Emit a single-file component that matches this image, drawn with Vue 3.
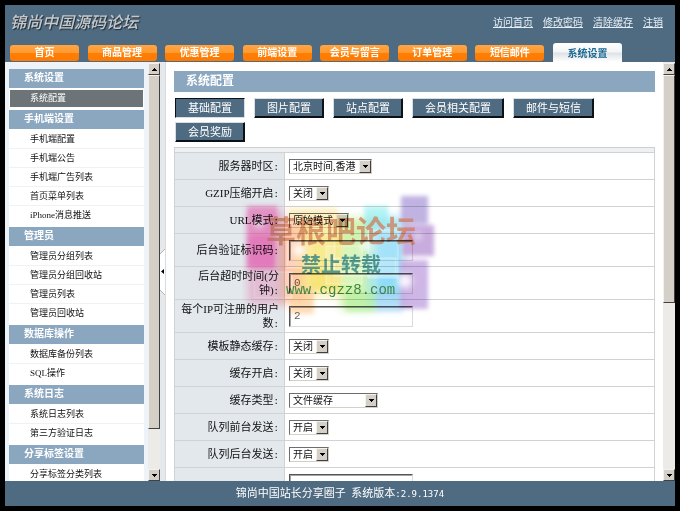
<script setup>
import { ref } from 'vue'

const userLinks = ['访问首页', '修改密码', '清除缓存', '注销']
const tabs = ['首页', '商品管理', '优惠管理', '前端设置', '会员与留言', '订单管理', '短信邮件', '系统设置']
const activeTab = '系统设置'

const menu = [
  { title: '系统设置', items: ['系统配置'] },
  { title: '手机端设置', items: ['手机端配置', '手机端公告', '手机端广告列表', '首页菜单列表', 'iPhone消息推送'] },
  { title: '管理员', items: ['管理员分组列表', '管理员分组回收站', '管理员列表', '管理员回收站'] },
  { title: '数据库操作', items: ['数据库备份列表', 'SQL操作'] },
  { title: '系统日志', items: ['系统日志列表', '第三方验证日志'] },
  { title: '分享标签设置', items: ['分享标签分类列表'] }
]
const activeItem = '系统配置'

const sections = ['基础配置', '图片配置', '站点配置', '会员相关配置', '邮件与短信', '会员奖励']
const activeSection = ref('基础配置')

const fields = ref([
  { id: 'timezone', label: '服务器时区', type: 'choice', size: 'large', value: '北京时间,香港' },
  { id: 'gzip', label: 'GZIP压缩开启', type: 'choice', size: 'small', value: '关闭' },
  { id: 'url', label: 'URL模式', type: 'choice', size: 'medium', value: '原始模式' },
  { id: 'code', label: '后台验证标识码', type: 'entry', value: '' },
  { id: 'timeout', label: '后台超时时间(分钟)', type: 'entry', value: '0' },
  { id: 'ip', label: '每个IP可注册的用户数', type: 'entry', value: '2' },
  { id: 'tplcache', label: '模板静态缓存', type: 'choice', size: 'small', value: '关闭' },
  { id: 'cache', label: '缓存开启', type: 'choice', size: 'small', value: '关闭' },
  { id: 'cachetype', label: '缓存类型', type: 'choice', size: 'wide', value: '文件缓存' },
  { id: 'front', label: '队列前台发送', type: 'choice', size: 'small', value: '开启' },
  { id: 'back', label: '队列后台发送', type: 'choice', size: 'small', value: '开启' },
  { id: 'count', label: '', type: 'entry', value: '' }
])
const options = {
  timezone: ['北京时间,香港'],
  url: ['原始模式'],
  cachetype: ['文件缓存']
}
const optionsFor = (id) => options[id] || ['开启', '关闭']
</script>

<template>
  <div class="page">
    <header class="header">
      <div class="brand-row">
        <h1 class="logo">锦尚中国源码论坛</h1>
        <nav class="user-links">
          <a v-for="l in userLinks" :key="l" href="#">{{ l }}</a>
        </nav>
      </div>
      <nav class="tabs">
        <a v-for="t in tabs" :key="t" href="#" class="tab" :class="{ active: t === activeTab }">{{ t }}</a>
      </nav>
    </header>

    <div class="body">
      <aside class="sidebar">
        <section v-for="g in menu" :key="g.title">
          <h2>{{ g.title }}</h2>
          <ul>
            <li v-for="i in g.items" :key="i">
              <a href="#" :class="{ current: i === activeItem }">{{ i }}</a>
            </li>
          </ul>
        </section>
      </aside>
      <div class="scrollbar left" aria-hidden="true">
        <span class="cap"><svg viewBox="0 0 5 3"><path d="M2 0h1v1h1v1h1v1H0V2h1V1h1z" /></svg></span>
        <span class="thumb"></span>
        <span class="track"></span>
        <span class="cap"><svg viewBox="0 0 5 3"><path d="M0 0h5v1H4v1H3v1H2V2H1V1H0z" /></svg></span>
      </div>
      <div class="splitter" aria-hidden="true">
        <svg viewBox="0 0 5 46"><path d="M5 0L0 5v36l5 5z" fill="#fff" /><path d="M5 0L0 5M0 41l5 5" stroke="#b5b5b5" fill="none" /><path d="M4 20v5L1 22.500z" fill="#000" /></svg>
      </div>

      <main class="main">
        <h2 class="title">系统配置</h2>
        <div class="sections">
          <button
            v-for="s in sections"
            :key="s"
            type="button"
            :class="{ pressed: s === activeSection }"
            @click="activeSection = s"
          >{{ s }}</button>
        </div>
        <div class="strip"></div>
        <table class="settings">
          <tbody>
            <tr v-for="f in fields" :key="f.id" :class="f.type">
              <th scope="row"><label :for="f.id">{{ f.label }}<span v-if="f.label" class="colon">:</span></label></th>
              <td>
                <span v-if="f.type === 'choice'" class="select" :class="f.size">
                  <select :id="f.id" v-model="f.value">
                    <option v-for="o in optionsFor(f.id)" :key="o">{{ o }}</option>
                  </select>
                  <span class="drop" aria-hidden="true"><svg viewBox="0 0 5 3"><path d="M0 0h5v1H4v1H3v1H2V2H1V1H0z" /></svg></span>
                </span>
                <input v-else :id="f.id" v-model="f.value" type="text" />
              </td>
            </tr>
          </tbody>
        </table>

        <svg class="stamp" viewBox="0 0 204 132" width="204" height="132">
          <defs>
            <filter id="soft" x="-20%" y="-20%" width="140%" height="140%"><feGaussianBlur stdDeviation="2" /></filter>
            <filter id="wide" x="-20%" y="-20%" width="140%" height="140%"><feGaussianBlur stdDeviation="4" /></filter>
            <filter id="glow" x="-50%" y="-50%" width="200%" height="200%"><feGaussianBlur stdDeviation="3" /></filter>
          </defs>
          <g filter="url(#wide)">
            <rect x="6" y="22" width="36" height="94" fill="#ffa0cc" opacity=".6" />
            <rect x="38" y="32" width="28" height="84" fill="#ffb287" opacity=".7" />
            <rect x="58" y="32" width="44" height="76" fill="#f8e469" opacity=".6" />
            <rect x="98" y="30" width="34" height="92" fill="#b9ec86" opacity=".65" />
            <rect x="126" y="28" width="36" height="92" fill="#86dcf5" opacity=".65" />
          </g>
          <g filter="url(#soft)">
            <rect x="5" y="18" width="30" height="30" fill="#ff7cc4" opacity=".6" />
            <rect x="5" y="48" width="28" height="32" fill="#ff5cba" opacity=".6" />
            <rect x="46" y="20" width="50" height="14" fill="#fbe6a0" opacity=".6" />
            <rect x="68" y="50" width="30" height="52" fill="#f3dc4c" opacity=".5" />
            <rect x="48" y="100" width="24" height="26" fill="#fdd09b" opacity=".7" />
            <rect x="104" y="104" width="30" height="20" fill="#b4f0a0" opacity=".6" />
            <rect x="122" y="18" width="24" height="20" fill="#8eeeee" opacity=".6" />
            <rect x="136" y="46" width="22" height="62" fill="#6fd2fa" opacity=".5" />
            <rect x="134" y="100" width="26" height="24" fill="#a5d0f6" opacity=".5" />
            <rect x="159" y="8" width="27" height="28" fill="#b5a6dc" opacity=".85" />
            <rect x="160" y="37" width="32" height="31" fill="#bb97d6" opacity=".8" />
            <rect x="158" y="72" width="28" height="49" fill="#c2a4e0" opacity=".8" />
          </g>
          <g fill="#fff" fill-opacity=".18" stroke="#fff" stroke-opacity=".4">
            <rect x="45" y="52" width="48" height="28" />
            <rect x="84" y="58" width="36" height="38" />
            <rect x="92" y="70" width="62" height="18" />
            <rect x="12" y="84" width="38" height="26" />
            <rect x="126" y="42" width="30" height="48" />
          </g>
          <g fill="#fff" filter="url(#glow)" opacity=".9">
            <circle cx="57" cy="62" r="6" />
            <circle cx="17" cy="35" r="5" />
            <circle cx="124" cy="58" r="5" />
            <circle cx="163" cy="93" r="7" />
            <circle cx="176" cy="48" r="3" />
          </g>
          <text x="24" y="54" class="stamp-name">草根吧论坛</text>
          <text x="59" y="84" class="stamp-note">禁止转载</text>
          <text x="44" y="106" class="stamp-url">www.cgzz8.com</text>
        </svg>
      </main>
      <div class="scrollbar right" aria-hidden="true">
        <span class="cap"><svg viewBox="0 0 5 3"><path d="M2 0h1v1h1v1h1v1H0V2h1V1h1z" /></svg></span>
        <span class="thumb"></span>
        <span class="track"></span>
        <span class="cap"><svg viewBox="0 0 5 3"><path d="M0 0h5v1H4v1H3v1H2V2H1V1H0z" /></svg></span>
      </div>
    </div>

    <footer class="footer">锦尚中国站长分享圈子&nbsp; 系统版本<span class="version">:2.9.1374</span></footer>
  </div>
</template>

<style>
body {
  background: #000;
}
</style>

<style scoped>
.page {
  box-sizing: border-box;
  height: 100vh;
  border: 5px solid #000;
  display: flex;
  flex-direction: column;
  font-family: "Liberation Serif", "Noto Sans CJK SC", serif;
  font-size: 11px;
  color: #111;
  background: #fff;
}
h1, h2, ul {
  margin: 0;
  padding: 0;
  list-style: none;
}
a {
  color: inherit;
}

.header {
  background: #4f6b81;
  height: 57px;
  flex: none;
  display: flex;
  flex-direction: column;
  justify-content: space-between;
}
.brand-row {
  display: flex;
  justify-content: space-between;
  align-items: center;
  padding: 6px 12px 0 5px;
  height: 30px;
  box-sizing: border-box;
}
.logo {
  font-size: 16px;
  line-height: 24px;
  font-style: italic;
  font-weight: 500;
  color: #c6c8ca;
  text-shadow: 1px 1px 1px #1f2c36;
}
.user-links {
  display: flex;
  gap: 10px;
  font-size: 10px;
  line-height: 16px;
  color: #e6eef5;
}
.tabs {
  display: flex;
  justify-content: space-between;
  align-items: center;
  max-width: 612px;
  margin-left: 5px;
}
.tab {
  width: 69px;
  height: 16px;
  border-radius: 3px;
  background: linear-gradient(#ffa443 0, #ff9a30 50%, #ff7e05 50%, #ff7a00 100%);
  color: #fff;
  font-size: 10px;
  font-weight: bold;
  line-height: 16px;
  text-align: center;
  text-decoration: none;
}
.tab.active {
  height: 19px;
  line-height: 21px;
  border-radius: 3px 3px 0 0;
  background: linear-gradient(#fff 0, #f4f5f6 45%, #dfe3e6 55%, #fff 100%);
  color: #1b6a93;
}

.body {
  flex: 1;
  min-height: 0;
  display: flex;
}
.sidebar {
  width: 135px;
  flex: none;
  padding: 7px 4px 0;
  background: #edf3f8;
  overflow: hidden;
}
.sidebar h2 {
  height: 19px;
  line-height: 18px;
  padding-left: 15px;
  background: #8ba7c0;
  color: #fff;
  font-size: 10px;
  font-weight: bold;
}
.sidebar ul {
  background: #fff;
  padding: 1px 0 2px;
}
.sidebar li {
  height: 19px;
  box-sizing: border-box;
  border-bottom: 1px solid #edf2f6;
}
.sidebar li:last-child {
  border-bottom: 0;
}
.sidebar li a {
  display: block;
  padding-left: 21px;
  font-size: 9px;
  line-height: 19px;
  text-decoration: none;
}
.sidebar li a.current {
  margin: 0 1px;
  padding-left: 20px;
  line-height: 17px;
  background: #6d7478;
  color: #fff;
}
.sidebar li:has(.current) {
  padding-top: 1px;
}

.scrollbar {
  width: 12px;
  flex: none;
  display: flex;
  flex-direction: column;
  background: #ecebe7;
  padding-top: 1px;
}
.cap,
.thumb,
.drop {
  box-sizing: border-box;
  background: #d4d0c8;
  border: 1px solid;
  border-color: #f4f2ee #404040 #404040 #f4f2ee;
}
.cap {
  height: 12px;
  flex: none;
  display: flex;
  align-items: center;
  justify-content: center;
}
.cap svg,
.drop svg {
  width: 5px;
  height: 3px;
}
.left .thumb {
  flex: 354;
}
.left .track {
  flex: 40;
}
.right .thumb {
  flex: 227;
}
.right .track {
  flex: 167;
}

.splitter {
  width: 5px;
  flex: none;
  display: flex;
  align-items: center;
  background: #e6e9ec;
  border-right: 1px solid #d8dcdf;
}
.splitter svg {
  width: 5px;
  height: 46px;
}

.main {
  flex: 1;
  min-width: 0;
  position: relative;
  overflow: hidden;
  padding: 9px 8px 0;
}
.title {
  height: 21px;
  line-height: 21px;
  padding-left: 12px;
  background: #8ba7c0;
  color: #fff;
  font-size: 12px;
  font-weight: bold;
}
.sections {
  display: flex;
  flex-wrap: wrap;
  gap: 4px 9px;
  padding: 6px 40px 5px 1px;
}
.sections button {
  height: 20px;
  padding: 0 12px;
  border: 1px solid;
  border-color: #d9dee2 #0b1116 #0b1116 #d9dee2;
  box-shadow: inset -1px -1px 0 #0b1116;
  background: #4f6b81;
  color: #fff;
  font-family: inherit;
  font-size: 11px;
  line-height: 16px;
}
.sections button.pressed {
  border-color: #0b1116 #d9dee2 #d9dee2 #0b1116;
  box-shadow: none;
}

.strip {
  height: 4px;
  background: #eef0f1;
  border: 1px solid #ccd0d2;
  border-bottom: 0;
}
.settings {
  width: 100%;
  border-collapse: collapse;
}
.settings th,
.settings td {
  height: 26px;
  border: 1px solid #d0d2d4;
  padding: 0 5px 0 4px;
  font-weight: normal;
  line-height: 14px;
}
.settings .entry th,
.settings .entry td {
  height: 32px;
}
.settings th {
  background: #e2e8ec;
  text-align: right;
}
.settings label {
  display: block;
  width: 100px;
}
.settings td {
  width: 100%;
}
.colon {
  font-family: "DejaVu Sans Mono", monospace;
  font-size: 9px;
  line-height: 1;
}
.select {
  display: flex;
  box-sizing: border-box;
  height: 15px;
  border: 1px solid;
  border-color: #6d6d6d #d4d0c8 #d4d0c8 #6d6d6d;
  background: #fff;
}
.select.small {
  width: 40px;
}
.select.medium {
  width: 60px;
}
.select.large {
  width: 83px;
}
.select.wide {
  width: 89px;
}
select {
  flex: 1;
  min-width: 0;
  appearance: none;
  border: 0;
  margin: 0;
  padding: 0 0 0 3px;
  background: transparent;
  color: #111;
  font-family: inherit;
  font-size: 10px;
  line-height: 13px;
}
.drop {
  width: 12px;
  flex: none;
  display: flex;
  align-items: center;
  justify-content: center;
  pointer-events: none;
}
input {
  display: block;
  box-sizing: border-box;
  width: 124px;
  height: 21px;
  padding: 0 4px;
  border: 1px solid;
  border-color: #555 #dedbd5 #dedbd5 #555;
  box-shadow: inset 1px 1px 0 #a5a5a5;
  background: #fff;
  color: #666;
  font-family: "Liberation Mono", monospace;
  font-size: 11px;
}

.stamp {
  position: absolute;
  left: 76px;
  top: 126px;
  pointer-events: none;
  mix-blend-mode: multiply;
}
.stamp text {
  font-family: "Liberation Mono", "Noto Sans CJK SC", monospace;
}
.stamp-name {
  font-size: 30px;
  font-weight: bold;
  fill: #cf7d58;
  opacity: .75;
}
.stamp-note {
  font-size: 20px;
  font-weight: bold;
  fill: #3d8c84;
  opacity: .85;
}
.stamp-url {
  font-size: 14px;
  fill: #3f8a45;
}

.footer {
  height: 25px;
  flex: none;
  background: #4f6b81;
  color: #fff;
  line-height: 24px;
  text-align: center;
}
.version {
  font-family: "DejaVu Sans Mono", monospace;
  font-size: 9px;
}
</style>
